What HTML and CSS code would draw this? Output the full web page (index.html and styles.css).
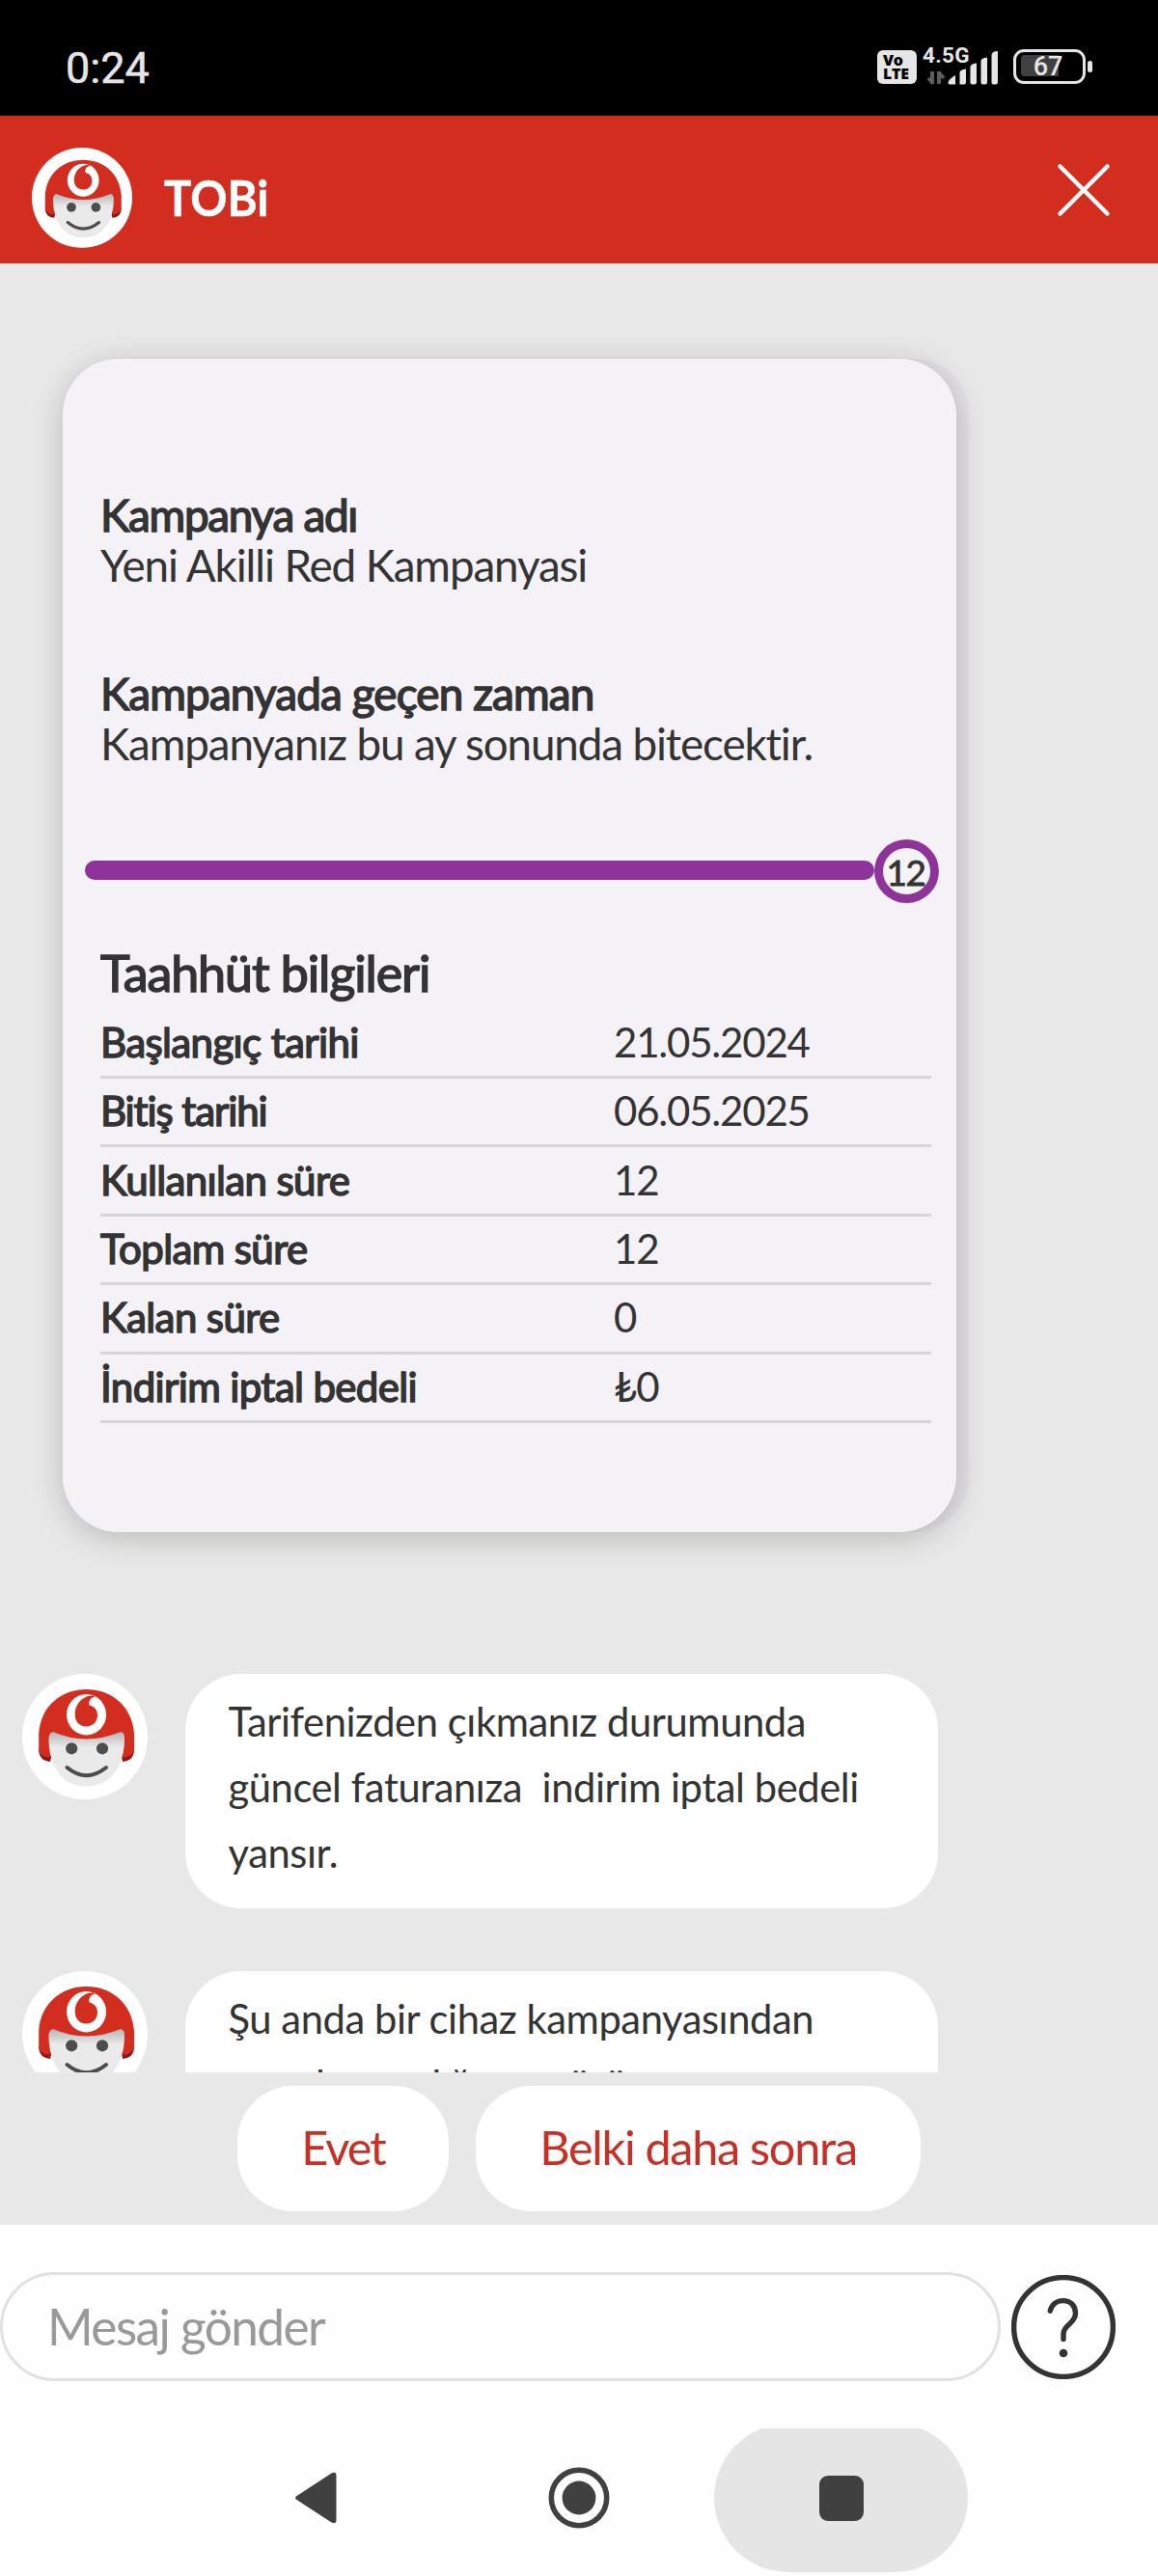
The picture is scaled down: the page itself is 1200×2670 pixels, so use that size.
FILE: index.html
```html
<!DOCTYPE html>
<html lang="tr">
<head>
<meta charset="utf-8">
<title>TOBi</title>
<link rel="stylesheet" href="styles.css">
</head>
<body>
<svg class="defs" width="0" height="0">
  <defs>
    <linearGradient id="face-shade" x1="0" y1="60" x2="0" y2="76" gradientUnits="userSpaceOnUse">
      <stop offset="0" stop-color="#b5b5b5"/>
      <stop offset="1" stop-color="#eaeaea"/>
    </linearGradient>
    <symbol id="tobi" viewBox="0 0 130 130">
      <circle cx="65" cy="65" r="65" fill="#fff"/>
      <path d="M17.2 78Q17.2 90 29 91L32 78zM116 78Q116 90 104.200 91L101 78z" fill="#8c1710"/>
      <path d="M17.200 80V62C19 34 40 16 66.600 16S114 34 116 62V80Q113 86 105 87L99 62H34L28 87Q20 86 17.200 80z" fill="#d32d20"/>
      <path d="M27.500 66Q28 60 33 60Q49 67 66.500 67T101 60Q106 60 106 66C106.500 92 94 116.700 66.600 116.700S27 92 27.500 66z" fill="url(#face-shade)"/>
      <path d="M32 60Q49 67.500 66.600 67.500T102 60V55H32z" fill="#d32d20"/>
      <ellipse cx="66.500" cy="42.200" rx="20.500" ry="21.200" fill="#fff"/>
      <path d="M73.500 22.300C62 22.500 54.700 32 54.700 42C54.700 50 60 54.500 66.500 54.500S78 49.500 78 43C78 37 74.500 33.500 69.500 32.500C68.500 28.500 70.500 24.500 75.500 23.400z" fill="#d32d20"/>
      <circle cx="51.200" cy="77.300" r="6.100" fill="#4d4d4f"/>
      <circle cx="83" cy="77.300" r="6.100" fill="#4d4d4f"/>
      <path d="M46.500 97Q66.500 113.500 87 97" fill="none" stroke="#4d4d4f" stroke-width="4" stroke-linecap="round"/>
    </symbol>
  </defs>
</svg>

<div class="status">
  <span class="clock">0:24</span>
  <div class="indicators">
    <div class="volte"><span>Vo</span><span>LTE</span></div>
    <div class="signal">
      <span class="network">4.5G</span>
      <svg width="80" height="40" viewBox="0 0 80 40">
        <path d="M10 25v13M11 37.500L6 32M17 38V25M16.500 26L22 32" stroke="#5c5c5c" stroke-width="4" fill="none"/>
        <path d="M26.500 36.500Q27 33 34 29V38.500H28Q26.500 38.500 26.500 36.500zM38.500 26Q39 23 45 22.500V36.500Q45 38.500 43 38.500H38.500zM49.500 20Q50 17 56 16.500V36.500Q56 38.500 54 38.500H51.500Q49.500 38.500 49.500 36.500zM60.500 14Q61 11 67 10.500V36.500Q67 38.500 65 38.500H62.500Q60.500 38.500 60.500 36.500zM71.500 8Q72 4 78 4V36.500Q78 38.500 76 38.500H73.500Q71.500 38.500 71.500 36.500z" fill="#e6e6e6"/>
      </svg>
    </div>
    <div class="battery"><span class="charge"></span><span class="level">67</span></div>
    <span class="nub"></span>
  </div>
</div>

<header class="header">
  <svg class="header-avatar"><use href="#tobi"/></svg>
  <h1 class="title">TOBi</h1>
  <svg class="close" width="56" height="56" viewBox="0 0 56 56"><path d="M3.500 3.500L52.500 52.500M52.500 3.500L3.500 52.500" stroke="#fff" stroke-width="4.500" stroke-linecap="round"/></svg>
</header>

<main class="chat">
  <div class="card-shell">
    <section class="card">
      <div class="info">
        <h2 class="label">Kampanya adı</h2>
        <p class="text">Yeni Akilli Red Kampanyasi</p>
      </div>
      <div class="info">
        <h2 class="label elapsed">Kampanyada geçen zaman</h2>
        <p class="text">Kampanyanız bu ay sonunda bitecektir.</p>
      </div>
      <div class="progress"><span class="bar"></span><span class="knob">12</span></div>
      <h2 class="heading">Taahhüt bilgileri</h2>
      <dl class="table">
        <div class="row"><dt>Başlangıç tarihi</dt><dd>21.05.2024</dd></div>
        <div class="row end"><dt>Bitiş tarihi</dt><dd>06.05.2025</dd></div>
        <div class="row"><dt>Kullanılan süre</dt><dd>12</dd></div>
        <div class="row"><dt>Toplam süre</dt><dd>12</dd></div>
        <div class="row"><dt>Kalan süre</dt><dd>0</dd></div>
        <div class="row"><dt>İndirim iptal bedeli</dt><dd>₺0</dd></div>
      </dl>
    </section>
  </div>

  <div class="message">
    <svg class="avatar"><use href="#tobi"/></svg>
    <p class="bubble">Tarifenizden çıkmanız durumunda<br>güncel faturanıza&nbsp; indirim iptal bedeli<br>yansır.</p>
  </div>
  <div class="message">
    <svg class="avatar"><use href="#tobi"/></svg>
    <p class="bubble">Şu anda bir cihaz kampanyasından<br>yararlanmadığınızı görüyorum.</p>
  </div>
</main>

<div class="replies">
  <button class="chip yes">Evet</button>
  <button class="chip later">Belki daha sonra</button>
</div>

<div class="composer">
  <div class="input">Mesaj gönder</div>
  <svg class="help" width="108" height="108" viewBox="0 0 108 108" fill="none" stroke="#333" stroke-width="5.400">
    <circle cx="54" cy="54" r="51.400"/>
    <path d="M40.300 37.200C42 30.500 47 26.600 53.500 26.600C61.500 26.600 66.500 32 66.500 39.500C66.500 44 65 46.500 60.500 50.500C56 54.500 54 57 54 61V66.500" stroke-linecap="round"/>
    <circle cx="54" cy="81" r="4.300" fill="#333" stroke="none"/>
  </svg>
</div>

<nav class="nav">
  <svg class="back" width="44" height="54" viewBox="0 0 44 54"><path d="M2.500 25L38.500 1.500Q43 -.5 43.500 3V51Q43 54.500 38.500 52.500L2.500 29Q-.5 27 2.500 25z" fill="#404040"/></svg>
  <svg class="home" width="64" height="64" viewBox="0 0 64 64"><circle cx="32" cy="32" r="28.700" fill="none" stroke="#404040" stroke-width="5.600"/><circle cx="32" cy="32" r="17.400" fill="#404040"/></svg>
  <div class="recent"><span class="square"></span></div>
</nav>
</body>
</html>
```
FILE: styles.css
```css
* { box-sizing: border-box; margin: 0; padding: 0; }

body {
  width: 1200px;
  height: 2670px;
  overflow: hidden;
  display: flex;
  flex-direction: column;
  background: #fefefe;
  color: #333;
  font-family: Lato, "Open Sans", sans-serif;
  font-weight: 400;
}

.defs { position: absolute; }

.status {
  flex: none;
  height: 120px;
  padding: 18px 68px 0 68px;
  display: flex;
  justify-content: space-between;
  align-items: center;
  background: #000;
  color: #e6e6e6;
  font-family: Roboto, sans-serif;
}
.clock { margin-top: 3px; font-size: 45px; line-height: 52px; font-weight: 400; -webkit-text-stroke: .5px #e6e6e6; }
.indicators { display: flex; align-items: flex-start; height: 41px; }
.volte {
  width: 41px;
  height: 35px;
  margin: 3px 6px 0 0;
  padding: 3px 0 0 6px;
  display: flex;
  flex-direction: column;
  border-radius: 6px;
  background: #e6e6e6;
  color: #000;
  font: 800 16px/14.500px "Open Sans", sans-serif;
  letter-spacing: -.3px;
}
.signal { position: relative; width: 80px; height: 40px; margin-right: 14px; }
.signal svg { display: block; }
.network { position: absolute; left: 0; top: -5px; font: 700 22.500px/26px Roboto, sans-serif; letter-spacing: .3px; }
.battery {
  position: relative;
  width: 75px;
  height: 36px;
  margin-top: 2px;
  padding: 3.500px 4.500px;
  border: 3.500px solid #e6e6e6;
  border-radius: 11px;
}
.charge { display: block; width: 39px; height: 22px; border-radius: 4px 0 0 4px; background: #404040; }
.level { position: absolute; left: 0; right: 3px; top: 1px; text-align: center; font-size: 27px; line-height: 29px; font-weight: 500; }
.nub { width: 5px; height: 12px; margin: 14px 0 0 2px; border-radius: 3px; background: #e6e6e6; }

.header {
  flex: none;
  height: 153px;
  padding: 33px 49px 0 33px;
  display: flex;
  align-items: flex-start;
  background: #d32d20;
  color: #fff;
}
.header-avatar { width: 104px; height: 104px; }
.title {
  margin: 21px 0 0 33px;
  font-size: 51.500px;
  line-height: 60px;
  font-weight: 700;
  transform: scaleX(.92);
  transform-origin: 0 0;
  -webkit-text-stroke: .6px #fff;
}
.close { margin: 16px 0 0 auto; }

.chat {
  flex: none;
  height: 1875px;
  overflow: hidden;
  padding-top: 99px;
  background: #e8e8e8;
}
.card-shell {
  width: 939px;
  height: 1216px;
  margin: 0 0 147px 65px;
  border-radius: 57px;
  background: linear-gradient(90deg, #fff 50%, #e2e0e4 50%);
}
.card {
  width: 926px;
  height: 1216px;
  padding: 136px 26px 0 39px;
  border-radius: 59px;
  background: #f4f2f6;
  box-shadow: 0 6px 32px rgba(0, 0, 0, .2);
}
.info { height: 103px; margin-bottom: 82px; }
.label, .text { font-size: 45.800px; line-height: 51.500px; font-weight: 400; letter-spacing: -1.130px; white-space: nowrap; }
.label, .heading, .table dt { -webkit-text-stroke: 1.500px #333; }
.label { letter-spacing: -1.250px; }
.elapsed { letter-spacing: -.850px; }

.progress { display: flex; align-items: center; width: 885px; height: 66px; margin: -8px 0 42px -16px; }
.bar { width: 818px; height: 20px; margin-top: -2px; border-radius: 10px; background: #8e339a; }
.knob {
  width: 67px;
  height: 66px;
  border: 9px solid #8e339a;
  border-radius: 50%;
  background: #f4f4f4;
  font-size: 37px;
  line-height: 49px;
  text-align: center;
  letter-spacing: -1.500px;
  text-indent: -2px;
  -webkit-text-stroke: .8px #333;
}
.heading { height: 68.600px; font-size: 52px; line-height: 60px; font-weight: 400; letter-spacing: -1.100px; }
.row {
  display: flex;
  width: 861px;
  height: 71.400px;
  padding-top: 8.200px;
  border-bottom: 3px solid #d7d5d9;
  font-size: 42px;
  line-height: 50px;
}
.row dt { width: 532px; letter-spacing: -.620px; }
.end dt { letter-spacing: -1.100px; }
.row dd { letter-spacing: -1.200px; }

.message { display: flex; align-items: flex-start; margin: 0 0 65px 23px; }
.avatar { width: 130px; height: 130px; margin-right: 39px; }
.bubble {
  width: 780px;
  padding: 15px 0 24px 44.500px;
  border-radius: 58px;
  background: #fff;
  font-size: 41.700px;
  line-height: 68px;
  letter-spacing: -.420px;
  white-space: nowrap;
}

.replies {
  flex: none;
  height: 158px;
  padding: 14px 0 0 246px;
  display: flex;
  gap: 28px;
  background: #e8e8e8;
}
.chip {
  height: 130px;
  padding-bottom: 5px;
  border: 0;
  border-radius: 58px;
  background: #fff;
  color: #c93025;
  font: 400 48.600px Lato, sans-serif;
  letter-spacing: -1.280px;
}
.yes { width: 219px; letter-spacing: -1.900px; }
.later { width: 461px; }

.composer { flex: none; display: flex; height: 211px; padding-top: 49px; }
.input {
  width: 1037px;
  height: 113px;
  padding: 0 0 3px 46px;
  border: 3px solid #e1e1e1;
  border-radius: 57px;
  color: #999;
  font-size: 51.400px;
  line-height: 106px;
  letter-spacing: -1.570px;
}
.help { margin: 3px 0 0 11px; }

.nav { flex: none; display: flex; height: 153px; overflow: hidden; padding-left: 305px; }
.back { margin-top: 45px; }
.home { margin: 40px 0 0 219px; }
.recent {
  width: 263px;
  height: 154px;
  margin: -5px 0 0 108px;
  padding-top: 54px;
  border-radius: 77px;
  background: #e5e5e5;
}
.square { display: block; width: 46px; height: 47px; margin-left: 109px; border-radius: 9px; background: #404040; }
```
